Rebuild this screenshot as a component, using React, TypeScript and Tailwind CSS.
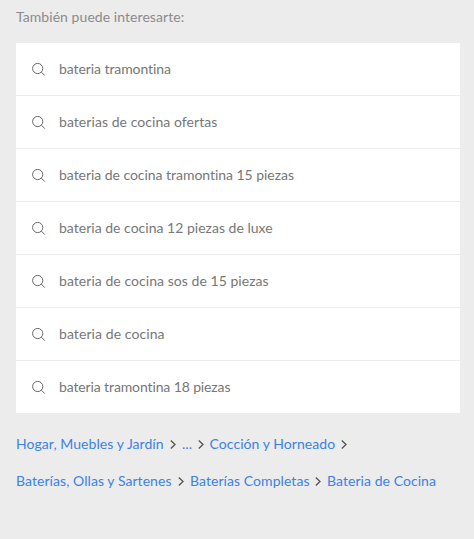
import { Fragment } from "react";

const suggestions = [
  { label: "bateria tramontina", tracking: "tracking-[-0.08px]" },
  { label: "baterias de cocina ofertas", tracking: "tracking-[0.06px]" },
  { label: "bateria de cocina tramontina 15 piezas", tracking: "tracking-[-0.04px]" },
  { label: "bateria de cocina 12 piezas de luxe", tracking: "tracking-[0.015px]" },
  { label: "bateria de cocina sos de 15 piezas", tracking: "tracking-[0.05px]" },
  { label: "bateria de cocina", tracking: "tracking-[0.08px]" },
  { label: "bateria tramontina 18 piezas", tracking: "tracking-[-0.12px]" },
];

const breadcrumbs = [
  [
    { label: "Hogar, Muebles y Jardín", width: "w-[148px]" },
    { label: "...", width: "w-[9.5px]" },
    { label: "Cocción y Horneado", width: "w-[125.5px]" },
  ],
  [
    { label: "Baterías, Ollas y Sartenes", width: "w-[156px]" },
    { label: "Baterías Completas", width: "w-[119px]" },
    { label: "Bateria de Cocina", width: "w-[110px]" },
  ],
];

function SearchIcon() {
  return (
    <svg className="mt-0.5 size-[14px] shrink-0" viewBox="0 0 14 14" fill="none" stroke="#666" strokeWidth="1">
      <circle cx="5.7" cy="5.5" r="5.1" />
      <path d="M9.4 9.2L12.8 12.6" />
    </svg>
  );
}

function Chevron() {
  return (
    <svg className="mx-[6px] h-[9px] w-[6px] shrink-0" viewBox="0 0 6 9" fill="none" stroke="#555" strokeWidth="1.3">
      <path d="M0.8 0.6L5 4.5L0.8 8.4" />
    </svg>
  );
}

export default function App() {
  return (
    <main className="h-[539px] w-[474px] overflow-hidden bg-[#ececec] pl-4 pr-[14px] font-['Lato',sans-serif] text-[14px]">
      <h2 className="flex h-[43px] items-start pt-[7px] leading-5 tracking-[0.06px] text-[#8b8b8b]">
        También puede interesarte:
      </h2>

      <ul className="divide-y divide-[#ececec] bg-white">
        {suggestions.map(({ label, tracking }) => (
          <li className="flex h-[53px] items-center pl-4 text-[#777] last:h-[52px]" key={label}>
            <SearchIcon />
            <span className={`ml-[13px] pb-0.5 whitespace-nowrap ${tracking}`}>{label}</span>
          </li>
        ))}
      </ul>

      <nav className="pt-[13px] tracking-[0.06px] text-[#3c82e6]">
        {breadcrumbs.map((row, rowIndex) => (
          <div className="flex h-[37px] items-center" key={rowIndex}>
            {row.map(({ label, width }, index) => (
              <Fragment key={label}>
                <a className={`pb-0.5 whitespace-nowrap ${width}`}>{label}</a>
                {(rowIndex === 0 || index < row.length - 1) && <Chevron />}
              </Fragment>
            ))}
          </div>
        ))}
      </nav>
    </main>
  );
}
